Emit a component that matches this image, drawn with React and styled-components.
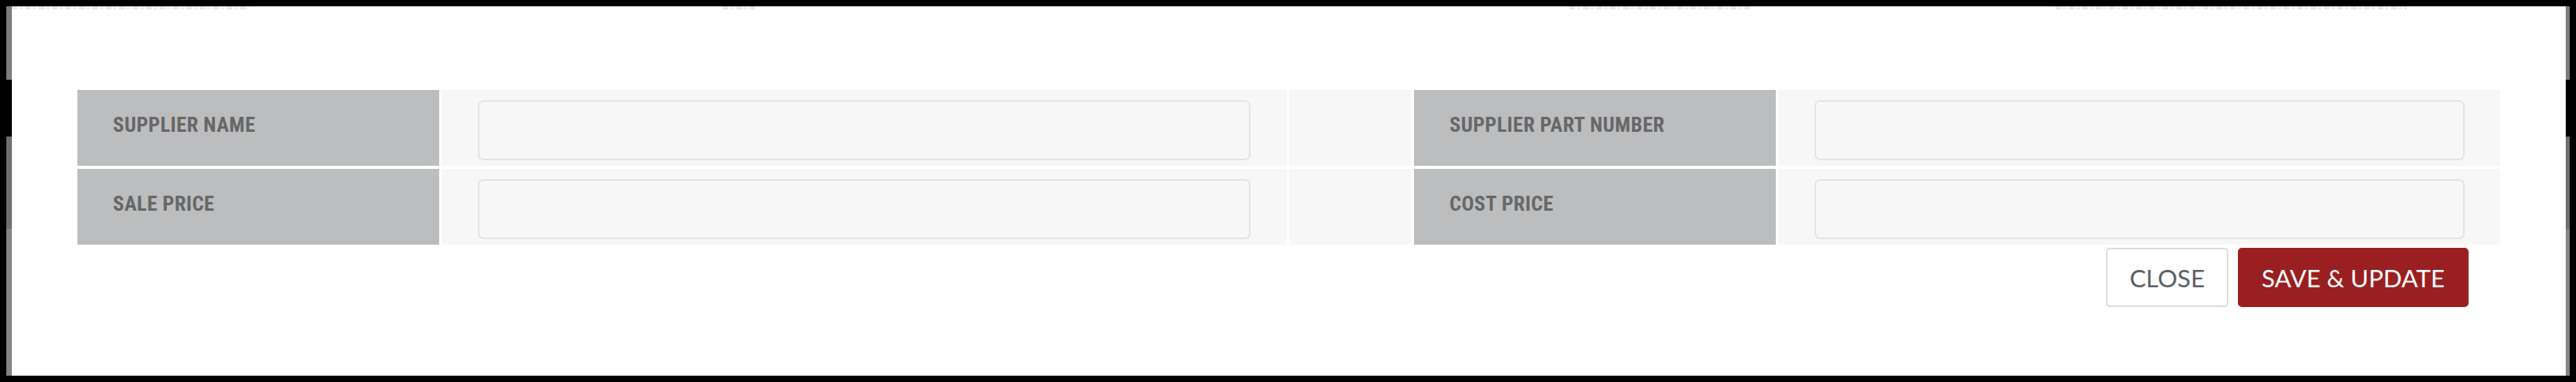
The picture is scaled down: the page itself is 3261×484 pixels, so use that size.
import React from "react";
import styled, { createGlobalStyle } from "styled-components";

const Global = createGlobalStyle`
  html, body { margin: 0; padding: 0; background: #000; }
  body { font-family: "Liberation Sans", Arial, sans-serif; }
  * { box-sizing: border-box; }
`;

const Backdrop = styled.div`
  width: 3261px;
  height: 484px;
  padding: 8px;
  background: #000;
`;

const Modal = styled.div`
  height: 468px;
  background: #fff;
  border-style: solid;
  border-width: 0 5px 0 7px;
  border-image: linear-gradient(
      to bottom,
      #7d7d7d 0 94px,
      #000 94px 165px,
      #6f6f6f 165px 282px,
      #858585 282px
    )
    1;
  padding: 0 83px 87px 83px;
  display: flex;
  flex-direction: column;
`;

const ScrollEdge = styled.div`
  height: 6px;
  margin: 0 -80px;
  display: flex;
  align-items: flex-start;
`;

const ScrollRemnant = styled.span`
  display: block;
  height: 4px;
  margin-left: ${(p) => p.$left}px;
  width: ${(p) => p.$width}px;
  background: repeating-linear-gradient(
    to right,
    #dcdcdc 0 7px,
    transparent 7px 9px,
    #e8e8e8 9px 14px,
    transparent 14px 17px
  );
  opacity: 0.7;
`;

const FormGrid = styled.div`
  margin-top: 100px;
  display: grid;
  grid-template-columns: 458px 1070px 155px 458px 1fr;
  grid-auto-rows: 96px;
  column-gap: 3px;
  row-gap: 4px;
`;

const LabelCell = styled.div`
  background: #bcbdbf;
  display: flex;
  align-items: center;
  padding: 0 0 9px 45px;
  font-family: "Liberation Sans Narrow", "Roboto Condensed", Roboto, sans-serif;
  font-weight: 700;
  font-size: 26px;
  letter-spacing: 0.4px;
  color: #676767;
  text-transform: uppercase;
`;

const FieldCell = styled.div`
  background: #f7f7f7;
  padding: 13px ${(p) => p.$padRight ?? 46}px 7px 46px;
`;

const SpacerCell = styled.div`
  background: #f7f7f7;
`;

const TextInput = styled.input`
  display: block;
  width: 100%;
  height: 76px;
  background: #f7f7f7;
  border: 2px solid #e3e3e3;
  border-radius: 7px;
  outline: none;
  font-family: Lato, sans-serif;
  font-size: 24px;
  padding: 0 16px;
`;

const Actions = styled.div`
  margin-top: 4px;
  display: flex;
  justify-content: flex-end;
  gap: 12px;
  padding-right: 40px;
`;

const Button = styled.button`
  height: 75px;
  padding: 0 28px;
  border-radius: 5px;
  font-family: Lato, sans-serif;
  font-size: 31px;
  font-weight: 400;
  text-transform: uppercase;
  cursor: pointer;
  border: 2px solid ${(p) => (p.$primary ? "#9a1f21" : "#dedede")};
  background: ${(p) => (p.$primary ? "#9a1f21" : "#fff")};
  color: ${(p) => (p.$primary ? "#fff" : "#5b5f66")};
`;

const rows = [
  { left: "Supplier Name", right: "Supplier Part Number" },
  { left: "Sale Price", right: "Cost Price" },
];

const remnants = [
  { left: -3, width: 300 },
  { left: 600, width: 42 },
  { left: 1030, width: 230 },
  { left: 385, width: 445 },
];

export default function App() {
  return (
    <>
      <Global />
      <Backdrop>
        <Modal>
          <ScrollEdge>
            {remnants.map((r, i) => (
              <ScrollRemnant key={i} $left={r.left} $width={r.width} />
            ))}
          </ScrollEdge>
          <FormGrid>
            {rows.map((r) => (
              <React.Fragment key={r.left}>
                <LabelCell>{r.left}</LabelCell>
                <FieldCell>
                  <TextInput type="text" />
                </FieldCell>
                <SpacerCell />
                <LabelCell>{r.right}</LabelCell>
                <FieldCell $padRight={45}>
                  <TextInput type="text" />
                </FieldCell>
              </React.Fragment>
            ))}
          </FormGrid>
          <Actions>
            <Button type="button">Close</Button>
            <Button type="button" $primary>
              Save &amp; Update
            </Button>
          </Actions>
        </Modal>
      </Backdrop>
    </>
  );
}
